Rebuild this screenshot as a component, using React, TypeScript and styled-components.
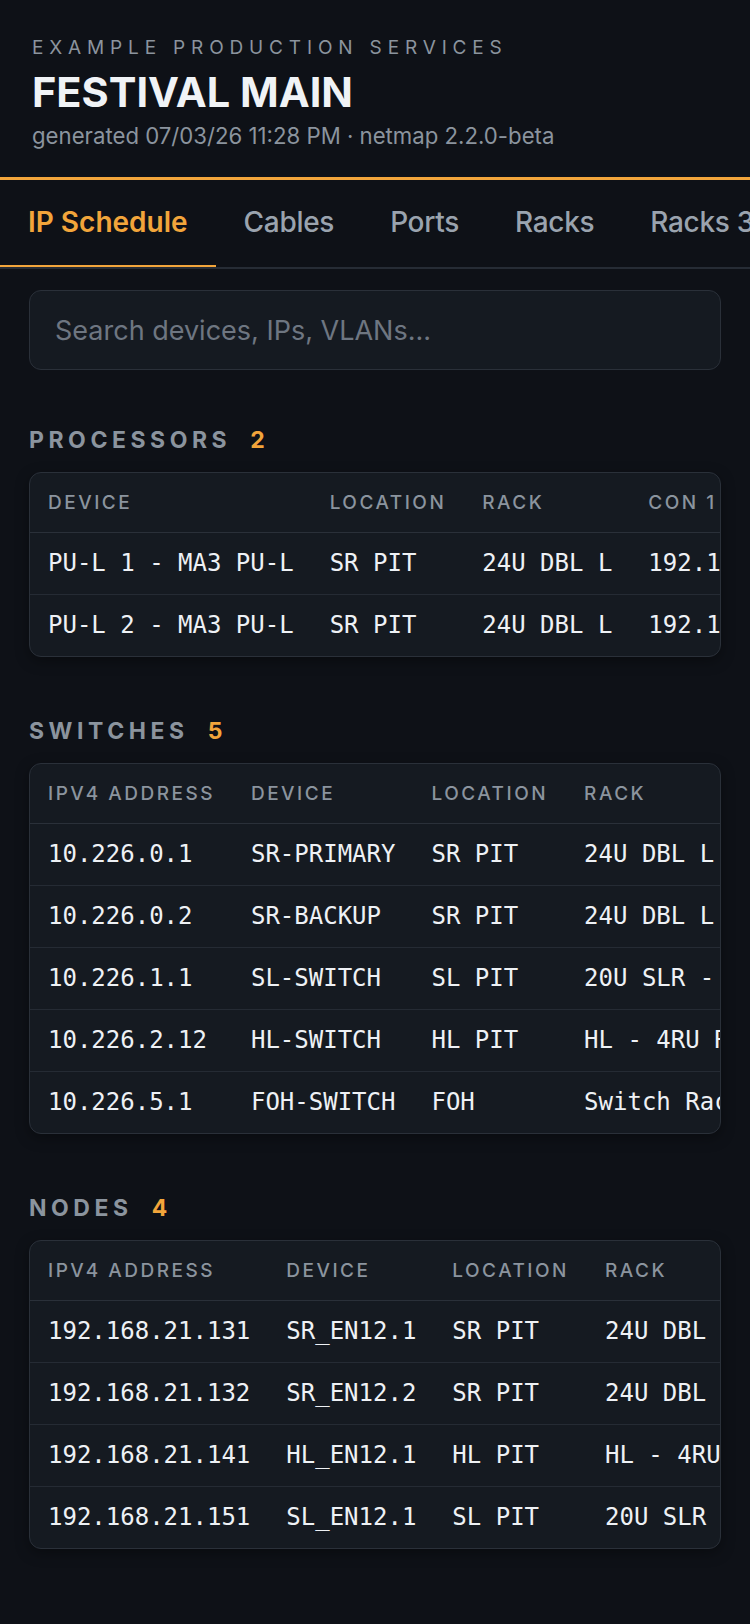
import React from "react";
import styled, { createGlobalStyle } from "styled-components";

const GlobalStyle = createGlobalStyle`
  html, body {
    margin: 0;
    padding: 0;
    background: #0e1117;
  }
  body {
    font-family: Inter, "Noto Sans", "Liberation Sans", sans-serif;
    color: #e6edf3;
    -webkit-font-smoothing: antialiased;
  }
  * { box-sizing: border-box; }
`;

const Page = styled.div`
  min-height: 1624px;
  background: #0e1117;
`;

const Header = styled.header`
  padding: 36px 32px 27px;
  border-bottom: 3px solid #f2a53b;
`;

const Eyebrow = styled.div`
  font-size: 19px;
  line-height: 24px;
  font-weight: 400;
  letter-spacing: 5.85px;
  color: #8b949e;
  text-transform: uppercase;
`;

const Title = styled.h1`
  margin: 8px 0 0;
  font-size: 41.5px;
  line-height: 48px;
  font-weight: 700;
  letter-spacing: 0;
  color: #f0f3f6;
`;

const Meta = styled.div`
  margin-top: 6px;
  font-size: 22.2px;
  line-height: 28px;
  color: #8b949e;
`;

const TabBar = styled.nav`
  display: flex;
  overflow: hidden;
  border-bottom: 2px solid #262c35;
`;

const Tab = styled.div<{ $active?: boolean }>`
  flex: none;
  padding: 26px 28px 27px;
  font-size: 28px;
  line-height: 32px;
  font-weight: ${(p) => (p.$active ? 600 : 500)};
  letter-spacing: ${(p) => (p.$active ? "0" : "-0.3px")};
  color: ${(p) => (p.$active ? "#f2a53b" : "#9aa3ae")};
  border-bottom: 4px solid ${(p) => (p.$active ? "#f2a53b" : "transparent")};
  margin-bottom: -2px;
  white-space: nowrap;
`;

const Content = styled.main`
  padding: 21px 29px 60px;
`;

const Search = styled.input`
  display: block;
  width: 100%;
  height: 80px;
  padding: 0 25px;
  background: #151a21;
  border: 1px solid #2a3039;
  border-radius: 12px;
  font-family: Inter, "Noto Sans", sans-serif;
  font-size: 27px;
  color: #e6edf3;
  outline: none;
  &::placeholder {
    color: #6e7681;
  }
`;

const Section = styled.section`
  margin-top: 60px;
  &:first-of-type {
    margin-top: 56px;
  }
`;

const SectionHead = styled.h2`
  display: flex;
  align-items: baseline;
  gap: 19px;
  margin: 0 0 18px;
  font-size: 23px;
  line-height: 28px;
  font-weight: 700;
  letter-spacing: 4.55px;
  color: #8b949e;
  text-transform: uppercase;
`;

const Count = styled.span`
  color: #f2a53b;
  letter-spacing: 0;
`;

const Card = styled.div`
  background: #151a21;
  border: 1px solid #2a3039;
  border-radius: 12px;
  overflow: hidden;
  box-shadow: 0 4px 14px rgba(0, 0, 0, 0.35);
`;

const Table = styled.table`
  width: max-content;
  border-collapse: collapse;
  white-space: nowrap;
`;

const Th = styled.th`
  padding: 18px 18px;
  text-align: left;
  font-family: Inter, "Noto Sans", sans-serif;
  font-size: 19px;
  line-height: 23px;
  font-weight: 500;
  letter-spacing: 2.5px;
  color: #8b949e;
  text-transform: uppercase;
  border-bottom: 1px solid #2a3039;
`;

const Td = styled.td`
  padding: 15px 18px 16px;
  font-family: "DejaVu Sans Mono", "Liberation Mono", monospace;
  font-size: 24px;
  line-height: 30px;
  color: #eef1f5;
`;

const Row = styled.tr`
  & + & td {
    border-top: 1px solid #252b34;
  }
`;

type Group = {
  title: string;
  columns: string[];
  rows: string[][];
};

const groups: Group[] = [
  {
    title: "Processors",
    columns: ["Device", "Location", "Rack", "Con 1", "Con 2"],
    rows: [
      ["PU-L 1 - MA3 PU-L", "SR PIT", "24U DBL L", "192.168.21.11", "192.168.22.11"],
      ["PU-L 2 - MA3 PU-L", "SR PIT", "24U DBL L", "192.168.21.12", "192.168.22.12"],
    ],
  },
  {
    title: "Switches",
    columns: ["IPv4 Address", "Device", "Location", "Rack"],
    rows: [
      ["10.226.0.1", "SR-PRIMARY", "SR PIT", "24U DBL L"],
      ["10.226.0.2", "SR-BACKUP", "SR PIT", "24U DBL L"],
      ["10.226.1.1", "SL-SWITCH", "SL PIT", "20U SLR - A"],
      ["10.226.2.12", "HL-SWITCH", "HL PIT", "HL - 4RU Rack"],
      ["10.226.5.1", "FOH-SWITCH", "FOH", "Switch Rack"],
    ],
  },
  {
    title: "Nodes",
    columns: ["IPv4 Address", "Device", "Location", "Rack"],
    rows: [
      ["192.168.21.131", "SR_EN12.1", "SR PIT", "24U DBL L"],
      ["192.168.21.132", "SR_EN12.2", "SR PIT", "24U DBL L"],
      ["192.168.21.141", "HL_EN12.1", "HL PIT", "HL - 4RU Rack"],
      ["192.168.21.151", "SL_EN12.1", "SL PIT", "20U SLR - A"],
    ],
  },
];

const tabs = ["IP Schedule", "Cables", "Ports", "Racks", "Racks 3D"];

export default function App() {
  return (
    <Page>
      <GlobalStyle />
      <Header>
        <Eyebrow>Example Production Services</Eyebrow>
        <Title>FESTIVAL MAIN</Title>
        <Meta>generated 07/03/26 11:28 PM · netmap 2.2.0-beta</Meta>
      </Header>
      <TabBar>
        {tabs.map((t, i) => (
          <Tab key={t} $active={i === 0}>
            {t}
          </Tab>
        ))}
      </TabBar>
      <Content>
        <Search placeholder="Search devices, IPs, VLANs..." />
        {groups.map((g) => (
          <Section key={g.title}>
            <SectionHead>
              {g.title}
              <Count>{g.rows.length}</Count>
            </SectionHead>
            <Card>
              <Table>
                <thead>
                  <tr>
                    {g.columns.map((c) => (
                      <Th key={c}>{c}</Th>
                    ))}
                  </tr>
                </thead>
                <tbody>
                  {g.rows.map((r, ri) => (
                    <Row key={ri}>
                      {r.map((cell, ci) => (
                        <Td key={ci}>{cell}</Td>
                      ))}
                    </Row>
                  ))}
                </tbody>
              </Table>
            </Card>
          </Section>
        ))}
      </Content>
    </Page>
  );
}
